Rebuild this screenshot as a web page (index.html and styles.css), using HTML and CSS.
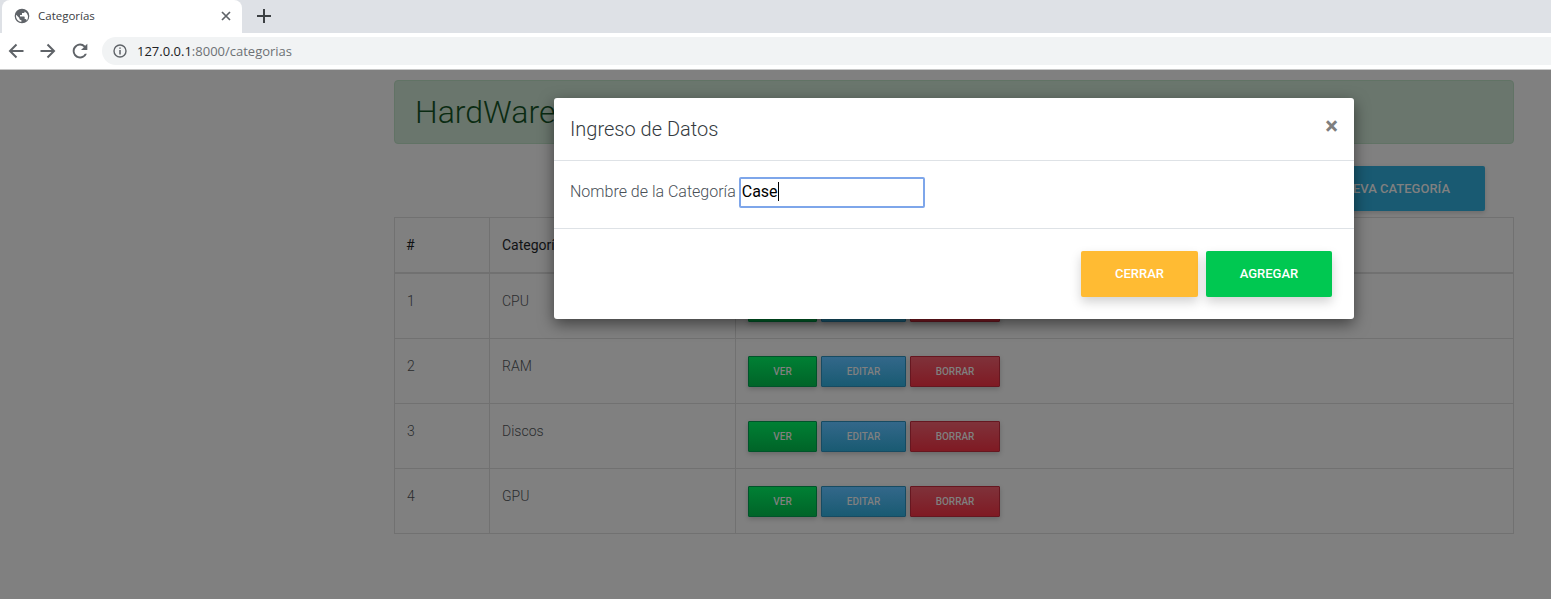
FILE: index.html
```html
<!DOCTYPE html>
<html lang="es">
<head>
    <meta charset="utf-8">
    <title>Categorías</title>
    <link rel="stylesheet" href="styles.css">
</head>
<body>
    <div class="tabstrip">
        <div class="tab">
            <svg class="tab-icon" width="16" height="16" viewBox="0 0 24 24"><path fill="#5f6368" d="M12 1a11 11 0 1 0 0 22 11 11 0 0 0 0-22zm-1 19.900A9 9 0 0 1 3.200 10L8 14.900v1c0 1.100.9 2 2 2h1zm7.900-2.900A2 2 0 0 0 17 16.600h-1v-3c0-.6-.4-1-1-1H9v-2h2c.6 0 1-.4 1-1v-2h2c1.100 0 2-.9 2-2v-.4a9 9 0 0 1 2.900 13.800z"/></svg>
            <span class="tab-title">Categorías</span>
            <svg class="tab-close" width="10" height="10" viewBox="0 0 10 10"><path d="M1 1l8 8M9 1L1 9" stroke="#5f6368" stroke-width="1.700"/></svg>
        </div>
        <svg class="tab-new" width="14" height="14" viewBox="0 0 14 14"><path d="M7 0v14M0 7h14" stroke="#3c4043" stroke-width="2"/></svg>
    </div>
    <div class="toolbar">
        <svg class="nav-icon" width="16" height="16" viewBox="0 0 16 16"><path d="M15.500 8H2M8.500 1.500L2 8l6.500 6.500" fill="none" stroke="#5f6368" stroke-width="2"/></svg>
        <svg class="nav-icon" width="16" height="16" viewBox="0 0 16 16"><path d="M.5 8H14M7.500 1.500L14 8l-6.500 6.500" fill="none" stroke="#5f6368" stroke-width="2"/></svg>
        <svg class="nav-icon" width="16" height="16" viewBox="0 0 24 24"><path fill="#5f6368" d="M19.800 4.200A11 11 0 0 0 1 12a11 11 0 0 0 21.300 4h-3a8.200 8.200 0 1 1-1.500-9.800L13.500 10.500H23V1z"/></svg>
        <div class="omnibox">
            <svg class="info-icon" width="14" height="14" viewBox="0 0 14 14"><circle cx="7" cy="7" r="6" fill="none" stroke="#5f6368" stroke-width="1.400"/><path d="M7 6v4.500M7 3.400v1.400" stroke="#5f6368" stroke-width="1.500"/></svg>
            <span class="url-host">127.0.0.1</span><span class="url-rest">:8000/categorias</span>
        </div>
    </div>

    <div class="viewport">
        <div class="content">
            <div class="banner">HardWare</div>
            <div class="actions">
                <a class="btn-new">NUEVA CATEGORÍA</a>
            </div>
            <table class="grid">
                <tr>
                    <th class="col-id">#</th>
                    <th class="col-name">Categoría</th>
                    <th>Acciones</th>
                </tr>
                <tr>
                    <td>1</td>
                    <td>CPU</td>
                    <td class="cell-buttons"><a class="btn-sm btn-ver">VER</a><a class="btn-sm btn-editar">EDITAR</a><a class="btn-sm btn-borrar">BORRAR</a></td>
                </tr>
                <tr>
                    <td>2</td>
                    <td>RAM</td>
                    <td class="cell-buttons"><a class="btn-sm btn-ver">VER</a><a class="btn-sm btn-editar">EDITAR</a><a class="btn-sm btn-borrar">BORRAR</a></td>
                </tr>
                <tr>
                    <td>3</td>
                    <td>Discos</td>
                    <td class="cell-buttons"><a class="btn-sm btn-ver">VER</a><a class="btn-sm btn-editar">EDITAR</a><a class="btn-sm btn-borrar">BORRAR</a></td>
                </tr>
                <tr>
                    <td>4</td>
                    <td>GPU</td>
                    <td class="cell-buttons"><a class="btn-sm btn-ver">VER</a><a class="btn-sm btn-editar">EDITAR</a><a class="btn-sm btn-borrar">BORRAR</a></td>
                </tr>
            </table>
        </div>

        <div class="modal">
            <div class="modal-header">
                <h4 class="modal-title">Ingreso de Datos</h4>
                <span class="modal-close">&times;</span>
            </div>
            <div class="modal-body">
                <span class="field-label">Nombre de la Categoría</span>
                <div class="field-input">Case<span class="caret"></span></div>
            </div>
            <div class="modal-footer">
                <a class="btn-modal btn-cerrar">CERRAR</a>
                <a class="btn-modal btn-agregar">AGREGAR</a>
            </div>
        </div>
    </div>
</body>
</html>
```

FILE: styles.css
```css
html, body
{
    margin: 0;
    padding: 0;
    height: 599px;
    overflow: hidden;
}
body
{
    font-family: Roboto, Arial, sans-serif;
    background-color: #808080;
}

/* browser chrome */
.tabstrip
{
    height: 33px;
    box-sizing: border-box;
    background-color: #dee1e6;
    display: flex;
    align-items: center;
    padding-left: 2px;
}
.tab
{
    width: 240px;
    height: 33px;
    box-sizing: border-box;
    background-color: #fff;
    border-radius: 8px 8px 0 0;
    display: flex;
    align-items: center;
    padding: 0 11px 2px 12px;
}
.tab-icon
{
    flex: none;
}
.tab-title
{
    font-family: "Open Sans", sans-serif;
    font-size: 11.500px;
    color: #3c4043;
    margin-left: 8px;
    flex: 1;
}
.tab-new
{
    margin: -2px 0 0 15px;
}
.toolbar
{
    height: 37px;
    box-sizing: border-box;
    background-color: #fff;
    border-bottom: 1px solid #c8c8c8;
    display: flex;
    align-items: center;
    padding-left: 8px;
}
.nav-icon
{
    margin-right: 16px;
    flex: none;
}
.omnibox
{
    flex: 1;
    height: 28px;
    margin-left: -2px;
    background-color: #f1f3f4;
    border-radius: 14px 0 0 14px;
    display: flex;
    align-items: center;
    padding-left: 11px;
    font-family: "Open Sans", sans-serif;
    font-size: 13px;
}
.info-icon
{
    margin-right: 10px;
}
.url-host
{
    color: #202124;
}
.url-rest
{
    color: #6d7175;
}

/* dimmed page */
.viewport
{
    position: relative;
    height: 529px;
}
.content
{
    padding: 10px 37px 0 394px;
}
.banner
{
    height: 64px;
    box-sizing: border-box;
    background-color: #6a766d;
    border: 1px solid #617365;
    border-radius: 4px;
    padding-left: 20px;
    font-size: 32px;
    font-weight: 300;
    line-height: 62px;
    color: #0a2b12;
}
.actions
{
    display: flex;
    justify-content: flex-end;
    padding: 22px 29px 6px 0;
}
.btn-new
{
    height: 45px;
    line-height: 45px;
    padding: 0 35px;
    background-color: #195a72;
    border-radius: 2px;
    color: #808080;
    font-size: 13px;
    font-weight: 500;
    box-shadow: 0 2px 5px rgba(0, 0, 0, .16);
}
.grid
{
    width: 100%;
    border-collapse: collapse;
    font-size: 14px;
    color: #2a2c2e;
}
.grid th, .grid td
{
    border: 1px solid #717171;
    padding: 0 12px;
    text-align: left;
}
.grid th
{
    height: 54px;
    font-weight: 400;
    color: #101214;
    border-bottom-width: 2px;
}
.grid td
{
    height: 65px;
    font-weight: 300;
    vertical-align: top;
    padding-top: 19px;
    box-sizing: border-box;
}
.grid .col-id
{
    width: 71px;
    padding-left: 11px;
}
.col-name
{
    width: 221px;
}
.grid .cell-buttons
{
    padding-top: 17px;
}
.btn-sm
{
    display: inline-block;
    height: 31px;
    box-sizing: border-box;
    line-height: 29px;
    text-align: center;
    border: 1px solid;
    border-radius: 1px;
    margin-right: 4px;
    font-size: 10px;
    font-weight: 500;
    color: #808080;
    box-shadow: 0 2px 5px rgba(0, 0, 0, .2);
}
.btn-ver
{
    width: 69px;
    background-image: linear-gradient(#008034, #006428);
    border-color: #00542a;
}
.btn-editar
{
    width: 85px;
    background-image: linear-gradient(#33688a, #195a72);
    border-color: #174b62;
}
.btn-borrar
{
    width: 90px;
    background-image: linear-gradient(#7f323a, #7f1a23);
    border-color: #661720;
}

/* dialog */
.modal
{
    position: absolute;
    left: 554px;
    top: 28px;
    width: 800px;
    background-color: #fff;
    border-radius: 3px;
    box-shadow: 0 5px 15px rgba(0, 0, 0, .5);
    color: #495057;
}
.modal-header
{
    height: 62px;
    border-bottom: 1px solid #dee2e6;
    display: flex;
    align-items: center;
    justify-content: space-between;
    padding: 0 16px;
}
.modal-title
{
    margin: 0;
    font-size: 20px;
    font-weight: 300;
    color: #343a40;
}
.modal-close
{
    font-size: 24px;
    font-weight: 700;
    color: #7f7f7f;
    margin-top: -7px;
}
.modal-body
{
    height: 67px;
    border-bottom: 1px solid #dee2e6;
    display: flex;
    align-items: flex-start;
    padding: 0 16px;
}
.field-label
{
    font-size: 16px;
    font-weight: 300;
    line-height: 31px;
    margin: 15px 3px 0 0;
}
.field-input
{
    width: 186px;
    height: 31px;
    margin-top: 16px;
    box-sizing: border-box;
    border: 2px solid #7ea6ea;
    border-radius: 2px;
    padding-left: 1px;
    line-height: 26px;
    font-size: 16px;
    color: #000;
}
.caret
{
    border-right: 1px solid #000;
}
.modal-footer
{
    height: 90px;
    display: flex;
    justify-content: flex-end;
    padding: 22px 22px 0 0;
    box-sizing: border-box;
}
.btn-modal
{
    height: 46px;
    line-height: 46px;
    text-align: center;
    border-radius: 2px;
    color: #fff;
    font-size: 13px;
    font-weight: 500;
    box-shadow: 0 5px 11px rgba(0, 0, 0, .18);
}
.btn-cerrar
{
    width: 117px;
    background-color: #ffbb33;
    margin-right: 8px;
}
.btn-agregar
{
    width: 126px;
    background-color: #00c851;
}
```
